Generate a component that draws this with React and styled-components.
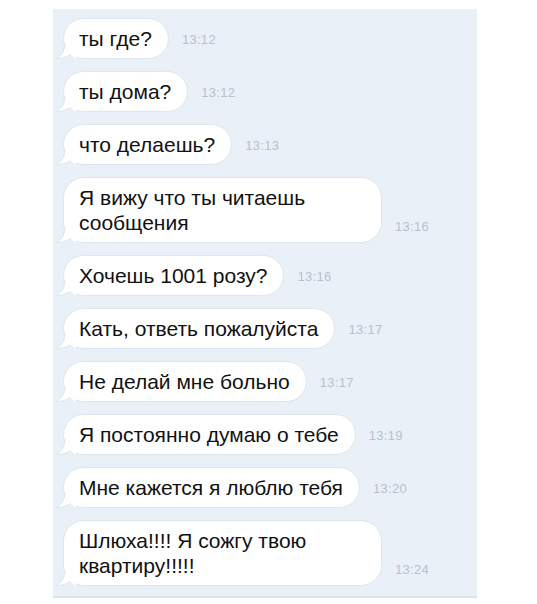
import styled, { createGlobalStyle } from 'styled-components'

const GlobalStyle = createGlobalStyle`
  html, body {
    margin: 0;
    padding: 0;
    background: #ffffff;
  }
  body {
    font-family: "Liberation Sans", Arial, sans-serif;
  }
`

const Page = styled.div`
  width: 537px;
  height: 604px;
  padding: 9px 0 0 53px;
  box-sizing: border-box;
`

const Panel = styled.div`
  width: 424px;
  height: 589px;
  box-sizing: border-box;
  background: #e9f0f8;
  border-bottom: 2px solid #dde3ea;
  padding: 9px 0 0 10px;
  display: flex;
  flex-direction: column;
  gap: 12px;
`

const Row = styled.div`
  display: flex;
  align-items: flex-end;
  gap: 13px;
`

const Bubble = styled.div`
  position: relative;
  max-width: 319px;
  box-sizing: border-box;
  background: #ffffff;
  border: 1px solid #dfe5ec;
  border-radius: 21px;
  padding: 7px 16px 7px 15px;
  font-size: 21px;
  line-height: 25px;
  color: #111111;
  ${p => p.$wide && 'width: 319px;'}
`

const Tail = styled.svg`
  position: absolute;
  left: -8px;
  bottom: -1px;
  width: 20px;
  height: 16px;
`

const Text = styled.span`
  position: relative;
`

const Time = styled.span`
  font-size: 13px;
  color: #b9c0ca;
  margin-bottom: ${p => (p.$wide ? '9px' : '12px')};
  letter-spacing: 0.3px;
`

const messages = [
  { text: 'ты где?', time: '13:12' },
  { text: 'ты дома?', time: '13:12' },
  { text: 'что делаешь?', time: '13:13' },
  { text: 'Я вижу что ты читаешь сообщения', time: '13:16', wide: true },
  { text: 'Хочешь 1001 розу?', time: '13:16' },
  { text: 'Кать, ответь пожалуйста', time: '13:17' },
  { text: 'Не делай мне больно', time: '13:17' },
  { text: 'Я постоянно думаю о тебе', time: '13:19' },
  { text: 'Мне кажется я люблю тебя', time: '13:20' },
  { text: 'Шлюха!!!! Я сожгу твою квартиру!!!!!', time: '13:24', wide: true },
]

function App() {
  return (
    <>
      <GlobalStyle />
      <Page>
        <Panel>
          {messages.map((m, i) => (
            <Row key={i}>
              <Bubble $wide={m.wide}>
                <Tail viewBox="0 0 20 16">
                  <path
                    d="M9 0 C9 7 6 12 0.5 15.5 C6 15.5 11 14 14 11 L20 16 L20 0 Z"
                    fill="#ffffff"
                  />
                  <path
                    d="M9 0 C9 7 6 12 0.5 15.5 C6 15.5 11 14 14 12"
                    fill="none"
                    stroke="#dfe5ec"
                    strokeWidth="1"
                  />
                </Tail>
                <Text>{m.text}</Text>
              </Bubble>
              <Time $wide={m.wide}>{m.time}</Time>
            </Row>
          ))}
        </Panel>
      </Page>
    </>
  )
}

export default App
